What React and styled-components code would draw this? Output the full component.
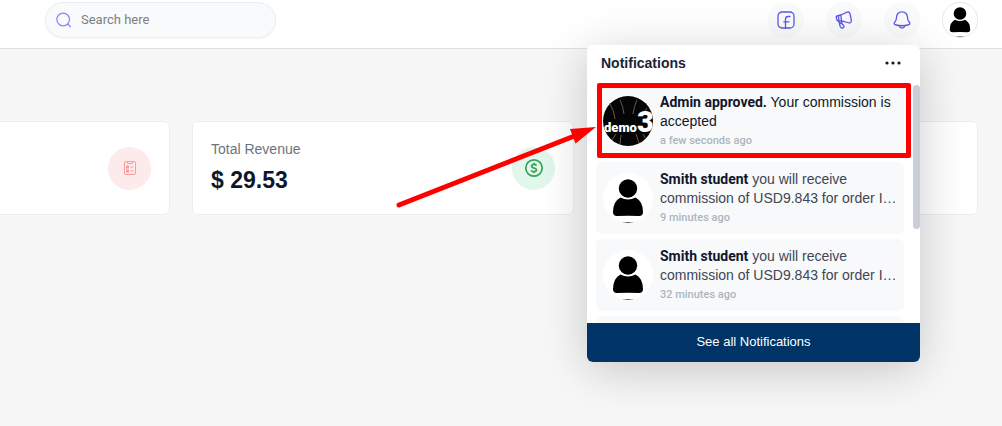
import React from "react";
import styled, { createGlobalStyle } from "styled-components";

const Global = createGlobalStyle`
  *, *::before, *::after { box-sizing: border-box; }
  body {
    margin: 0;
    min-height: 100vh;
    background: #f7f7f7;
    color: #0f172a;
    font-family: "Liberation Sans", Arial, sans-serif;
    overflow: hidden;
  }
`;

const Header = styled.header`
  position: relative;
  z-index: 2;
  display: flex;
  align-items: center;
  justify-content: space-between;
  padding: 2px 24px 10px 45px;
  background: #fff;
  border-bottom: 1px solid #dfe2e3;
`;

const SearchBox = styled.label`
  display: flex;
  align-items: center;
  gap: 9px;
  width: 231px;
  height: 36px;
  padding: 0 10px;
  background: #f8fafc;
  border: 1px solid #ebeef2;
  border-radius: 18px;
  box-shadow: 0 1px 2px rgba(15, 23, 42, 0.04);

  svg { flex: none; }
`;

const SearchInput = styled.input`
  flex: 1;
  min-width: 0;
  padding: 0 0 2px;
  border: 0;
  outline: 0;
  background: transparent;
  font: 13px Roboto, sans-serif;
  color: #0f172a;

  &::placeholder { color: #7c8083; opacity: 1; }
`;

const Actions = styled.nav`
  display: flex;
  gap: 22px;
`;

const RoundButton = styled.button`
  display: grid;
  place-items: center;
  width: 36px;
  height: 36px;
  padding: 0;
  border: ${(p) => (p.$outlined ? "1px solid #e2e5ea" : "0")};
  border-radius: 50%;
  overflow: hidden;
  background: ${(p) => (p.$outlined ? "#fff" : "#f8fafc")};
  color: #5f58e4;
`;

const Main = styled.main`
  display: grid;
  grid-template-columns: 170fr 382fr 382fr;
  gap: 22px;
  padding: 72px 24px 0 0;
`;

const Card = styled.section`
  display: flex;
  align-items: center;
  justify-content: space-between;
  min-width: 0;
  height: 94px;
  padding: 0 18px;
  background: #fff;
  border: 1px solid #ebedf1;
  border-radius: ${(p) => (p.$cut ? "0 6px 6px 0" : "6px")};
  border-left-width: ${(p) => (p.$cut ? "0" : "1px")};
`;

const CardText = styled.div`
  padding-bottom: 4px;
`;

const CardTitle = styled.h2`
  margin: 0 0 4px;
  font-size: 14px;
  line-height: 24px;
  font-weight: 400;
  color: #6c737b;
`;

const CardValue = styled.p`
  margin: 0;
  font-size: 23px;
  line-height: 30px;
  font-weight: 700;
`;

const CardBadge = styled.span`
  display: grid;
  place-items: center;
  width: 43px;
  height: 43px;
  margin-left: auto;
  border-radius: 50%;
  background: ${(p) => p.$tint};
`;

const Panel = styled.aside`
  position: absolute;
  top: 45px;
  right: 82px;
  width: 333px;
  background: #fff;
  border-radius: 6px;
  box-shadow: 0 8px 48px rgba(0, 0, 0, 0.2);
`;

const PanelHead = styled.div`
  display: flex;
  align-items: center;
  justify-content: space-between;
  height: 36px;
  padding: 0 18px 0 14px;
`;

const PanelTitle = styled.h3`
  margin: 0;
  font-size: 14px;
  line-height: 20px;
  font-weight: 700;
  color: #1b2436;
`;

const MoreButton = styled.button`
  display: flex;
  padding: 0;
  border: 0;
  background: none;
  color: #0f172a;
`;

const ListArea = styled.div`
  display: flex;
  justify-content: space-between;
  height: 242px;
  padding: 4px 0 0 9px;
  overflow: hidden;
`;

const List = styled.ul`
  display: flex;
  flex-direction: column;
  gap: 5px;
  width: 308px;
  margin: 0;
  padding: 0;
  list-style: none;
`;

const Item = styled.li`
  display: flex;
  gap: 7px;
  flex: none;
  height: 72px;
  padding: 8px 4px 0 7px;
  background: #f8f9fb;
  border-radius: 6px;
`;

const Avatar = styled.div`
  flex: none;
  width: 50px;
  height: 50px;
  margin-top: 3px;
  border-radius: 50%;
  overflow: hidden;
  background: #fff;
`;

const Message = styled.p`
  margin: 0;
  font-size: 14px;
  line-height: 19px;
  color: ${(p) => (p.$strong ? "#0f172a" : "#3f4653")};
`;

const Sender = styled.b`
  font-family: Roboto, sans-serif;
  line-height: 16px;
  color: #0f172a;
`;

const Time = styled.time`
  display: block;
  font: 500 11px/20px Roboto, sans-serif;
  color: #adb5bd;
`;

const Thumb = styled.div`
  width: 7px;
  height: 144px;
  border-radius: 4px;
  background: #c9ced8;
`;

const SeeAll = styled.a`
  display: block;
  height: 39px;
  background: #003366;
  color: #fff;
  border-radius: 0 0 6px 6px;
  font-size: 13px;
  line-height: 38px;
  text-align: center;
  text-decoration: none;
`;

const Highlight = styled.div`
  position: absolute;
  top: 38px;
  left: 10px;
  width: 314px;
  height: 75px;
  border: 5px solid #fe0000;
  border-radius: 2px;
`;

const Arrow = styled.svg`
  position: absolute;
  top: 75px;
  left: -197px;
  pointer-events: none;
`;

const Picture = styled.svg`
  display: block;
`;

const Person = ({ size }) => (
  <Picture width={size} height={size} viewBox="0 0 50 50">
    <rect width="50" height="50" fill="#fff" />
    <circle cx="25" cy="15.500" r="9.200" />
    <path d="M17.500 24.500Q25 28.500 32.500 24.500Q40 28.500 40 39Q40 43 36 43Q25 42.300 14 43Q10 43 10 39Q10 28.500 17.500 24.500Z" />
    <path d="M19 50.500Q25 49.800 31 50.500" stroke="#111" strokeWidth="1.600" />
  </Picture>
);

const DemoLogo = () => (
  <Picture width="50" height="50" viewBox="0 0 50 50">
    <rect width="50" height="50" fill="#050505" />
    <path
      d="M7 8Q11 14 12 23M17 4Q20 10 21 18M34 4Q31 10 30 18M44 12L39 19M13 38L9 44M18 39L17 48M33 38L36 47M40 38L43 43"
      stroke="#68594e"
      fill="none"
    />
    <g fill="#fff" fontFamily="Roboto, sans-serif" fontWeight="900">
      <text x="1" y="36" fontSize="13">demo</text>
      <text x="34" y="36" fontSize="29">3</text>
    </g>
  </Picture>
);

const line = { fill: "none", stroke: "currentColor", strokeWidth: 1.3, strokeLinecap: "round", strokeLinejoin: "round" };

const notes = [
  { who: "Admin approved.", text: "Your commission is accepted", time: "a few seconds ago", demo: true },
  { who: "Smith student", text: "you will receive commission of USD9.843 for order I…", time: "9 minutes ago" },
  { who: "Smith student", text: "you will receive commission of USD9.843 for order I…", time: "32 minutes ago" },
];

export default function App() {
  return (
    <>
      <Global />
      <Header>
        <SearchBox>
          <svg width="16" height="16" viewBox="0 0 16 16" fill="none" stroke="#8b83f0" strokeWidth="1.2" strokeLinecap="round">
            <circle cx="7.2" cy="7.500" r="6.300" />
            <path d="M11.800 12L14.500 14.800" />
          </svg>
          <SearchInput type="search" placeholder="Search here" aria-label="Search here" />
        </SearchBox>
        <Actions>
          <RoundButton aria-label="Facebook">
            <svg width="18" height="18" viewBox="0 0 18 18" {...line}>
              <rect x="1" y="1" width="16" height="16" rx="4" />
              <path d="M8.500 17V8.200Q8.500 5.500 11 5.500H13M6.800 10.800H12" />
            </svg>
          </RoundButton>
          <RoundButton aria-label="Announcements">
            <svg width="18" height="18" viewBox="0 0 18 18" {...line}>
              <path d="M1.300 6.200Q1 5.300 2 5L5.800 4L12 1.200Q14.200 .4 15 2.600L16.300 9Q16.600 12 14.200 12L6.800 9.800L3.300 10Q2.200 10 2 9Z" />
              <path d="M5.800 4L6.500 9.800M3.400 4.800L4 10M3.800 10L5.200 15.500Q6 17.500 7.800 17Q9.500 16.200 8.600 14.500L6.800 12.500V10M5 12L6.800 12.500" />
            </svg>
          </RoundButton>
          <RoundButton aria-label="Notifications">
            <svg width="18" height="18" viewBox="0 0 18 18" {...line}>
              <path d="M9 .8C5.500 .8 3.500 3.400 3.500 6.500C3.500 9 2.900 9.700 1.800 11C.5 12.800 1.200 13.600 3 14C7 15 11 15 15 14C16.800 13.600 17.500 12.800 16.200 11C15.100 9.700 14.500 9 14.500 6.500C14.500 3.400 12.500 .8 9 .8Z" />
              <path d="M6 14.800Q7 17.200 9 17.200T12 14.800" />
            </svg>
          </RoundButton>
          <RoundButton $outlined aria-label="Account"><Person size={34} /></RoundButton>
        </Actions>

        <Panel>
          <PanelHead>
            <PanelTitle>Notifications</PanelTitle>
            <MoreButton aria-label="More options">
              <svg width="18" height="4" viewBox="0 0 18 4" fill="currentColor">
                <circle cx="3" cy="2" r="1.600" />
                <circle cx="9" cy="2" r="1.600" />
                <circle cx="15" cy="2" r="1.600" />
              </svg>
            </MoreButton>
          </PanelHead>
          <ListArea>
            <List>
              {notes.map((n) => (
                <Item key={n.time}>
                  <Avatar>{n.demo ? <DemoLogo /> : <Person size={50} />}</Avatar>
                  <div>
                    <Message $strong={n.demo}><Sender>{n.who}</Sender> {n.text}</Message>
                    <Time>{n.time}</Time>
                  </div>
                </Item>
              ))}
              <Item />
            </List>
            <Thumb />
          </ListArea>
          <SeeAll href="#notifications">See all Notifications</SeeAll>
          <Highlight />
          <Arrow width="208" height="92" viewBox="0 0 208 92">
            <path d="M9 85L187 15" stroke="#fe0000" strokeWidth="5" strokeLinecap="round" />
            <path d="M206 7L180 9L185.500 23.500Z" fill="#fe0000" />
          </Arrow>
        </Panel>
      </Header>
      <Main>
        <Card $cut>
          <CardBadge $tint="#fdeaea">
            <svg width="14" height="16" viewBox="0 0 14 16" fill="none" stroke="#fb9a9a" strokeWidth="1">
              <rect x="1.500" y="1.500" width="11" height="13" rx="1.500" />
              <path d="M4.500 1.500V3.500H9.500V1.500M7.500 7H10.500M7.500 11H10.500" />
              <rect x="3.500" y="6" width="2" height="2" />
              <rect x="3.500" y="10" width="2" height="2" />
            </svg>
          </CardBadge>
        </Card>
        <Card>
          <CardText>
            <CardTitle>Total Revenue</CardTitle>
            <CardValue>$ 29.53</CardValue>
          </CardText>
          <CardBadge $tint="#e2f7eb">
            <svg width="20" height="20" viewBox="0 0 20 20" fill="none" stroke="#34a353" strokeWidth="1.700">
              <circle cx="10" cy="10" r="8.200" />
              <path d="M12.500 7.800Q12 6.400 10 6.400T7.600 8Q7.600 9.500 10 10T12.500 12Q12.500 13.600 10 13.600T7.400 12.200M10 4.800V6.400M10 13.600V15.200" />
            </svg>
          </CardBadge>
        </Card>
        <Card />
      </Main>
    </>
  );
}
